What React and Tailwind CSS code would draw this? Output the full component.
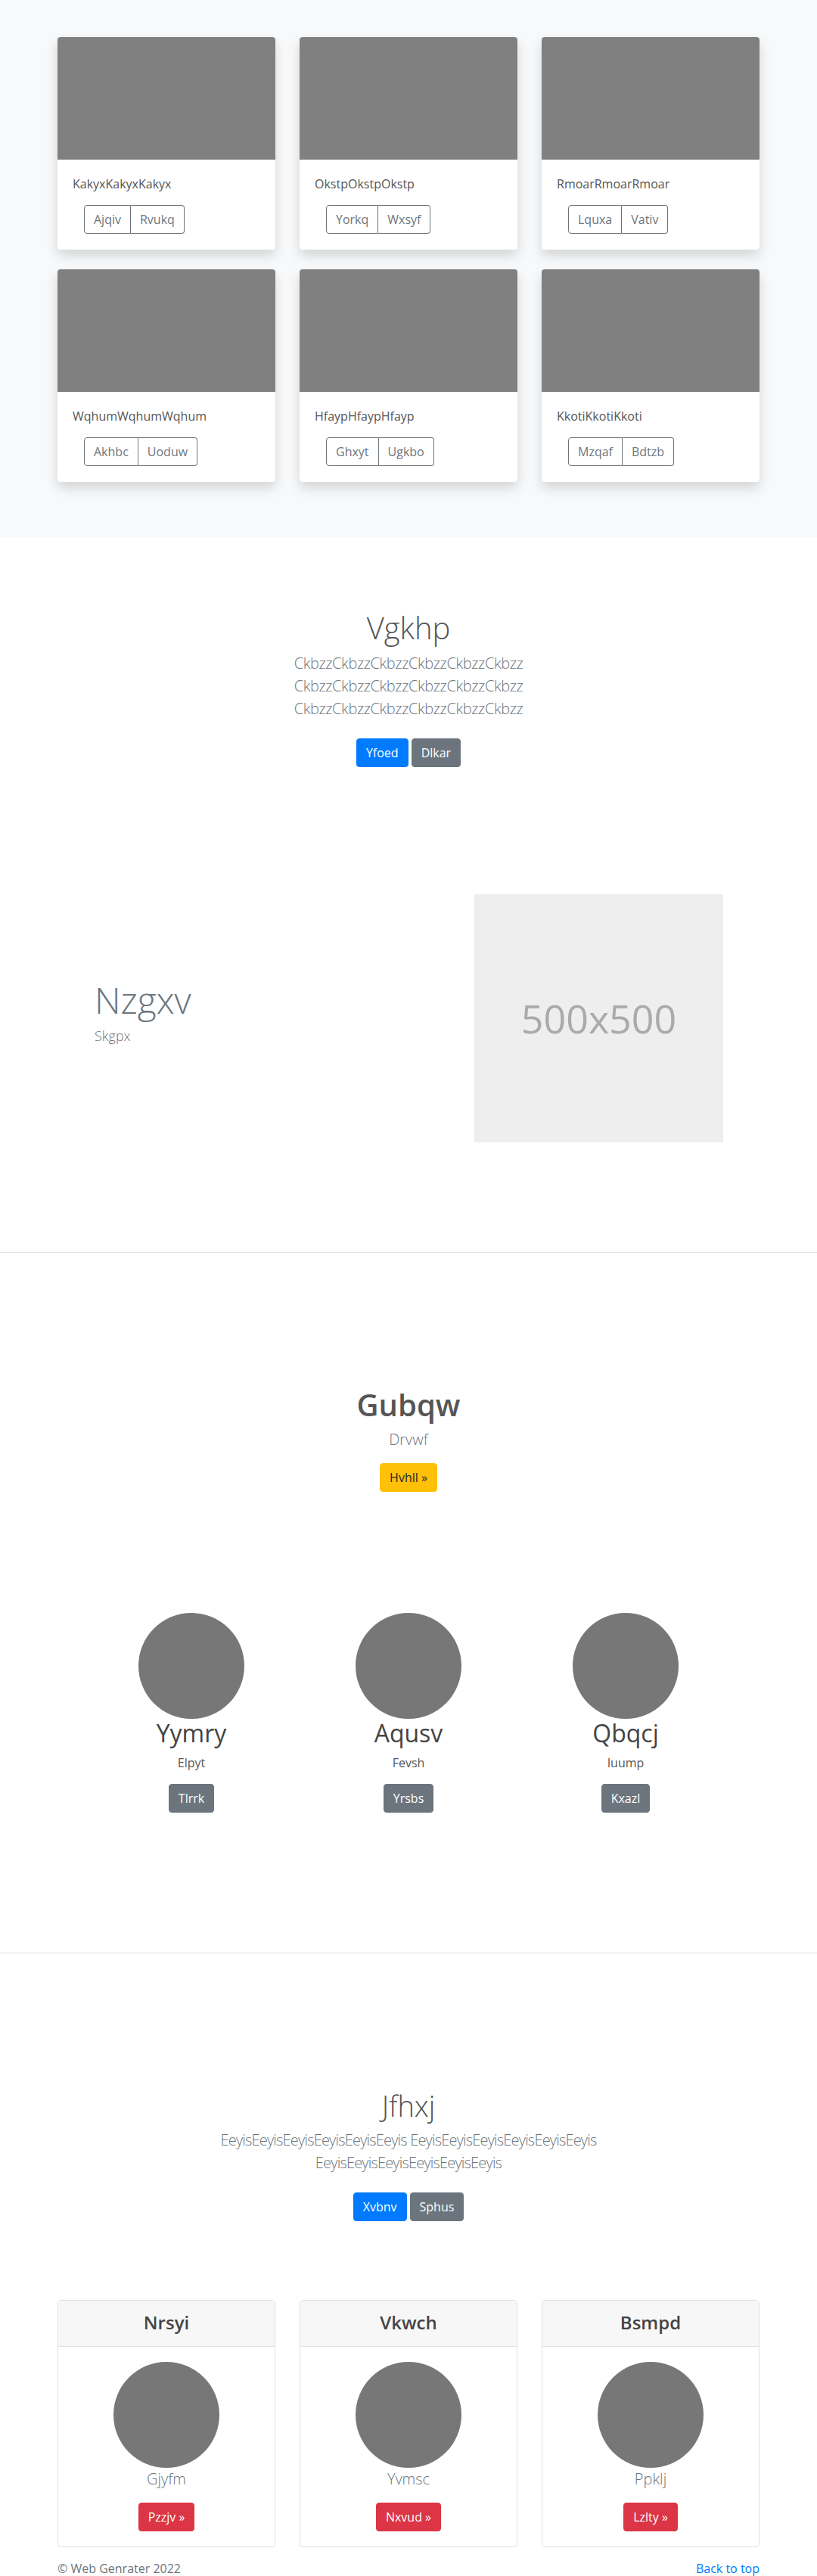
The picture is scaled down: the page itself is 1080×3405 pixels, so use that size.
import React from 'react'

const topCards = [
  { title: 'KakyxKakyxKakyx', a: 'Ajqiv', b: 'Rvukq' },
  { title: 'OkstpOkstpOkstp', a: 'Yorkq', b: 'Wxsyf' },
  { title: 'RmoarRmoarRmoar', a: 'Lquxa', b: 'Vativ' },
  { title: 'WqhumWqhumWqhum', a: 'Akhbc', b: 'Uoduw' },
  { title: 'HfaypHfaypHfayp', a: 'Ghxyt', b: 'Ugkbo' },
  { title: 'KkotiKkotiKkoti', a: 'Mzqaf', b: 'Bdtzb' },
]

const people = [
  { name: 'Yymry', sub: 'Elpyt', btn: 'Tlrrk' },
  { name: 'Aqusv', sub: 'Fevsh', btn: 'Yrsbs' },
  { name: 'Qbqcj', sub: 'Iuump', btn: 'Kxazl' },
]

const plans = [
  { head: 'Nrsyi', sub: 'Gjyfm', btn: 'Pzzjv' },
  { head: 'Vkwch', sub: 'Yvmsc', btn: 'Nxvud' },
  { head: 'Bsmpd', sub: 'Ppklj', btn: 'Lzlty' },
]

const btn = 'inline-block px-3 py-1.5 text-base leading-6 rounded border'

const AlbumCard = ({ card }) => (
  <div className="bg-white rounded shadow-[0_8px_16px_rgba(0,0,0,0.15)]">
    <div className="h-[162px] bg-[#808080] rounded-t" />
    <div className="px-5 pt-5 pb-[21px]">
      <p className="text-base leading-6 text-[#555]">{card.title}</p>
      <div className="mt-4 ml-[15px] flex">
        <button className="px-3 py-1.5 text-base leading-6 text-[#6c757d] border border-[#6c757d] rounded-l">
          {card.a}
        </button>
        <button className="px-3 py-1.5 text-base leading-6 text-[#6c757d] border border-l-0 border-[#6c757d] rounded-r">
          {card.b}
        </button>
      </div>
    </div>
  </div>
)

export default function App() {
  return (
    <div className="font-['Open_Sans',sans-serif] text-[#555] bg-white">
      {/* album */}
      <section className="bg-[#f8f9fa] pt-[49px] pb-[73px]">
        <div className="w-[928px] mx-auto grid grid-cols-3 gap-x-8 gap-y-[26px]">
          {topCards.map((c) => (
            <AlbumCard key={c.title} card={c} />
          ))}
        </div>
      </section>

      {/* jumbotron */}
      <section className="pt-[96px] text-center">
        <h1 className="text-[40px] leading-[48px] font-light text-[#555]">Vgkhp</h1>
        <p className="mt-2 text-[20px] leading-[30px] font-light tracking-[-0.4px] text-[#6c757d]">
          <span className="block">CkbzzCkbzzCkbzzCkbzzCkbzzCkbzz</span>
          <span className="block">CkbzzCkbzzCkbzzCkbzzCkbzzCkbzz</span>
          <span className="block">CkbzzCkbzzCkbzzCkbzzCkbzzCkbzz</span>
        </p>
        <div className="mt-6 flex justify-center gap-1">
          <a className={`${btn} bg-[#007bff] border-[#007bff] text-white`}>Yfoed</a>
          <a className={`${btn} bg-[#6c757d] border-[#6c757d] text-white`}>Dlkar</a>
        </div>
      </section>

      {/* feature with placeholder */}
      <section className="mt-[168px] pb-[145px]">
        <div className="w-[928px] mx-auto pl-[49px] pr-[48px] flex items-center justify-between">
          <div>
            <h2 className="text-[48px] leading-[58px] font-light text-[#6c757d]">Nzgxv</h2>
            <p className="mt-[5px] mb-4 text-[18px] leading-[27px] font-light text-[#6c757d]">Skgpx</p>
          </div>
          <div className="w-[329px] h-[328px] bg-[#eeeeee] flex items-center justify-center">
            <span className="text-[52px] text-[#aaaaaa]">500x500</span>
          </div>
        </div>
      </section>

      {/* heading + people */}
      <section className="border-t border-[#e5e5e5] pt-[177px] pb-[185px] text-center">
        <h2 className="text-[40px] leading-[48px] font-semibold text-[#555]">Gubqw</h2>
        <p className="mt-[7px] text-[20px] leading-[30px] font-light text-[#6c757d]">Drvwf</p>
        <a className={`${btn} mt-4 bg-[#ffc107] border-[#ffc107] text-[#212529]`}>Hvhll »</a>

        <div className="w-[861px] mx-auto mt-[160px] grid grid-cols-3">
          {people.map((p) => (
            <div key={p.name} className="flex flex-col items-center">
              <div className="w-[140px] h-[140px] rounded-full bg-[#777777]" />
              <h3 className="text-[32px] leading-[38px] text-[#444]">{p.name}</h3>
              <p className="mt-2 text-base leading-6 text-[#555]">{p.sub}</p>
              <a className={`${btn} mt-4 bg-[#6c757d] border-[#6c757d] text-white`}>{p.btn}</a>
            </div>
          ))}
        </div>
      </section>

      {/* pricing */}
      <section className="border-t border-[#e5e5e5] pt-[178px] text-center">
        <h2 className="text-[38px] leading-[46px] font-light text-[#555]">Jfhxj</h2>
        <p className="mt-2 text-[20px] leading-[30px] font-light tracking-[-0.8px] text-[#6c757d]">
          <span className="block">EeyisEeyisEeyisEeyisEeyisEeyis EeyisEeyisEeyisEeyisEeyisEeyis</span>
          <span className="block">EeyisEeyisEeyisEeyisEeyisEeyis</span>
        </p>
        <div className="mt-6 flex justify-center gap-1">
          <a className={`${btn} bg-[#007bff] border-[#007bff] text-white`}>Xvbnv</a>
          <a className={`${btn} bg-[#6c757d] border-[#6c757d] text-white`}>Sphus</a>
        </div>

        <div className="w-[928px] mx-auto mt-[104px] grid grid-cols-3 gap-x-8">
          {plans.map((p) => (
            <div key={p.head} className="border border-[#dfdfdf] rounded">
              <div className="bg-[#f7f7f7] border-b border-[#dfdfdf] pt-[14px] pb-[17px]">
                <h4 className="text-[24px] leading-[29px] font-semibold text-[#444]">{p.head}</h4>
              </div>
              <div className="pt-5 pb-5 flex flex-col items-center">
                <div className="w-[140px] h-[140px] rounded-full bg-[#777777]" />
                <p className="text-[20px] leading-[30px] font-light text-[#6c757d]">{p.sub}</p>
                <a className={`${btn} mt-4 bg-[#dc3545] border-[#dc3545] text-white`}>{p.btn} »</a>
              </div>
            </div>
          ))}
        </div>
      </section>

      <footer className="w-[928px] mx-auto mt-4 pb-12 flex justify-between text-base leading-6">
        <p className="text-[#6c757d]">© Web Genrater 2022</p>
        <a className="text-[#007bff]">Back to top</a>
      </footer>
    </div>
  )
}
